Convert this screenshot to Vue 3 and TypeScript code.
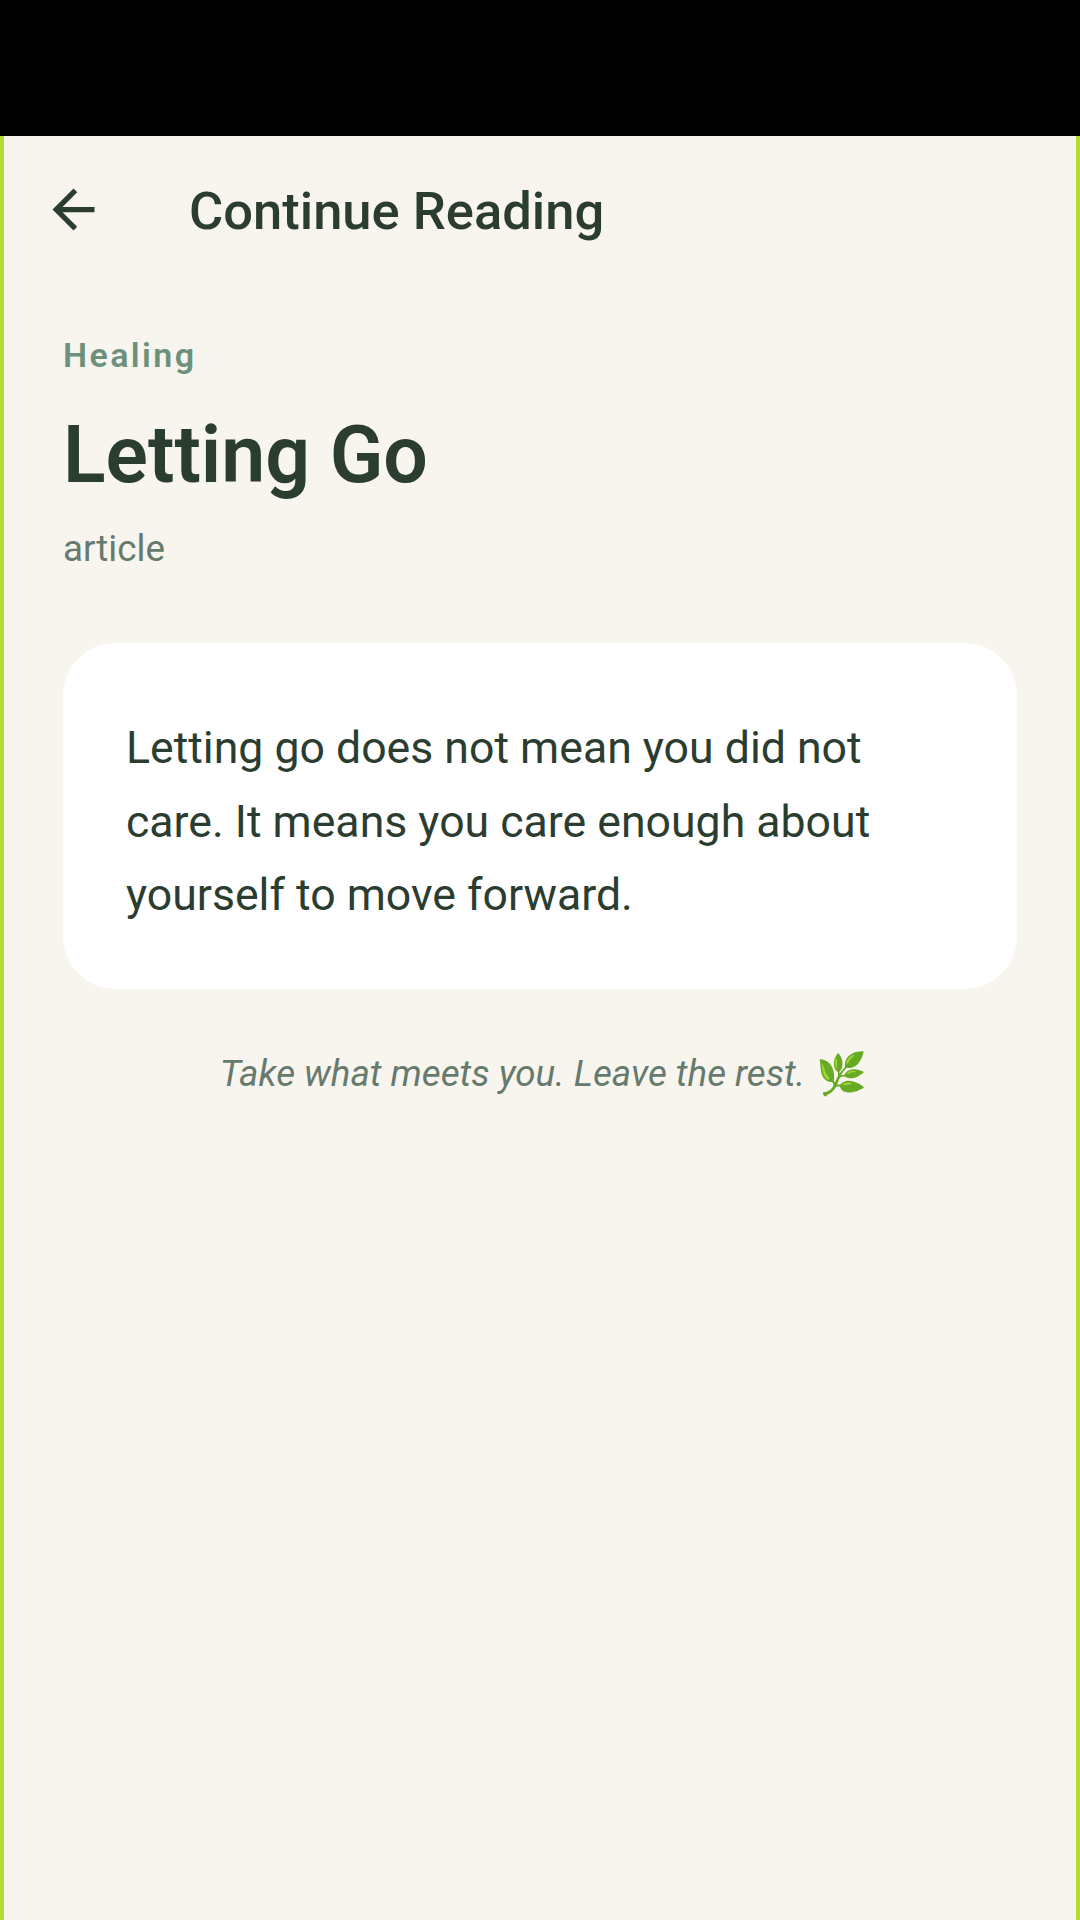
<script setup lang="ts">
const title = 'Letting Go'
</script>

<template>
  <div class="screen">
    <div class="status"></div>
    <main class="page">
      <header class="bar">
        <button class="back" aria-label="Back">
          <svg viewBox="0 0 24 24" width="63" height="63">
            <path d="M20 11H7.83l5.59-5.59L12 4l-8 8 8 8 1.41-1.41L7.83 13H20v-2z" fill="#2b3d31" />
          </svg>
        </button>
        <h2 class="bar-title">Continue Reading</h2>
      </header>
      <section class="content">
        <div class="eyebrow">Healing</div>
        <h1 class="title">{{ title }}</h1>
        <div class="kind">article</div>
        <div class="card">
          <p>Letting go does not mean you did not care. It means you care enough about yourself to move forward.</p>
        </div>
        <p class="note">Take what meets you. Leave the rest. <span class="leaf">🌿</span></p>
      </section>
    </main>
  </div>
</template>

<style scoped>
.screen {
  width: 1080px;
  height: 1920px;
  display: flex;
  flex-direction: column;
  font-family: Roboto, sans-serif;
  background: #000;
}
.status { height: 136px; flex: none; background: #000; }
.page {
  flex: 1;
  background: #f8f5ee;
  box-shadow: inset 4px 0 0 #b5dc30, inset -4px 0 0 #b5dc30;
}
.bar { height: 147px; display: flex; align-items: center; padding-left: 42px; }
.back { width: 63px; height: 63px; padding: 0; border: 0; background: none; flex: none; }
.back svg { display: block; }
.bar-title { margin: 2px 0 0 84px; font-size: 52.5px; font-weight: 500; color: #2b3d31; }
.content { padding: 0 63px; }
.eyebrow { margin-top: 50px; font-size: 34px; font-weight: 600; letter-spacing: 2.4px; color: #6b917b; line-height: 44px; }
.title { margin: 33px 0 0; font-size: 78.75px; font-weight: 600; color: #2b3d31; line-height: 90px; }
.kind { margin-top: 25px; font-size: 36.75px; color: #667a6e; line-height: 48px; }
.card { margin-top: 70px; background: #fff; border-radius: 52.5px; padding: 69px 63px 56px; }
.card p { margin: 0; font-size: 44.625px; line-height: 73.5px; color: #2b3d31; }
.note { margin: 60px 0 0; text-align: center; font-size: 36.75px; line-height: 50px; font-style: italic; color: #667a6e; }
.leaf { font-style: normal; font-size: 41px; margin-left: 2px; margin-right: -7px; line-height: 1; vertical-align: -2px; filter: brightness(1.12); }
</style>
